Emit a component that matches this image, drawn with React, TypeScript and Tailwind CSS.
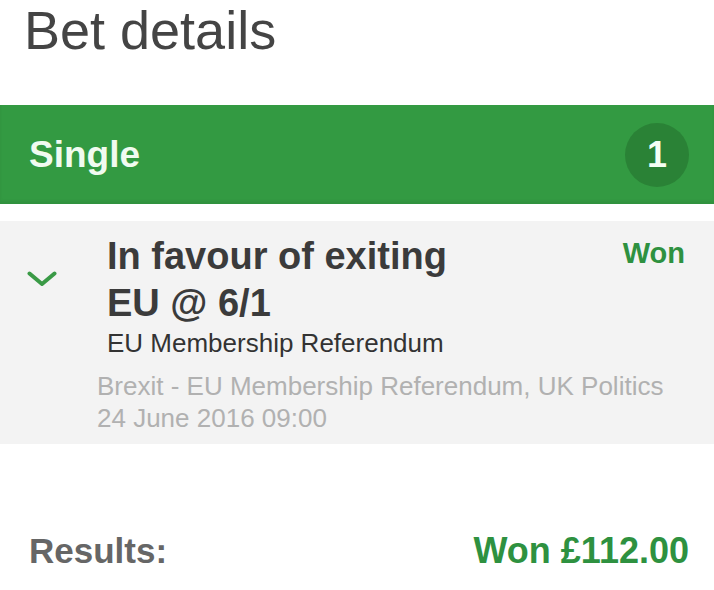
export default function App() {
  return (
    <div className="w-full min-h-screen bg-white" style={{ fontFamily: '"Liberation Sans", Arial, sans-serif' }}>
      {/* Header */}
      <div className="h-[105px] pl-[24px]">
        <h1 className="text-[54px] leading-[60px] text-[#444444] font-normal">Bet details</h1>
      </div>

      {/* Bet type bar */}
      <div className="h-[99px] bg-[#339a42] flex items-center justify-between pl-[29px] pr-[25px] shadow-[inset_0_-3px_3px_rgba(0,0,0,0.06)]">
        <span className="text-[37px] leading-[37px] font-bold text-[#f0fbf0]">Single</span>
        <span className="w-[64px] h-[64px] rounded-full bg-[#2a8236] flex items-center justify-center text-[36px] leading-none font-bold text-[#f4fff4]">
          1
        </span>
      </div>

      {/* Selection card */}
      <div className="mt-[17px] bg-[#f3f3f3] flex pt-[12px] pb-[10px] pr-[29px]">
        <div className="w-[107px] shrink-0 pl-[27px] pt-[38px]">
          <svg width="30" height="16" viewBox="0 0 30 16" fill="none">
            <polyline
              points="2.5,2.5 15,13 27.5,2.5"
              stroke="#3a9a46"
              strokeWidth="4"
              strokeLinecap="round"
              strokeLinejoin="round"
            />
          </svg>
        </div>
        <div className="flex-1 min-w-0">
          <div className="flex justify-between items-start">
            <div className="w-[370px] text-[38px] leading-[47px] font-bold text-[#3b3b3b]">
              In favour of exiting EU @ 6/1
            </div>
            <span className="text-[29px] leading-[40px] font-bold text-[#2e9140]">Won</span>
          </div>
          <div className="text-[26px] leading-[32px] text-[#333333]">EU Membership Referendum</div>
          <div className="mt-[11px] -ml-[10px] text-[26px] leading-[32px] text-[#b1b1b1]">
            <div>Brexit - EU Membership Referendum, UK Politics</div>
            <div>24 June 2016 09:00</div>
          </div>
        </div>
      </div>

      {/* Results */}
      <div className="mt-[89px] flex justify-between pl-[29px] pr-[25px]">
        <span className="text-[35px] leading-[35px] font-bold text-[#666666]">Results:</span>
        <span className="text-[36px] leading-[35px] font-bold text-[#2e9140]">Won £112.00</span>
      </div>
    </div>
  );
}
